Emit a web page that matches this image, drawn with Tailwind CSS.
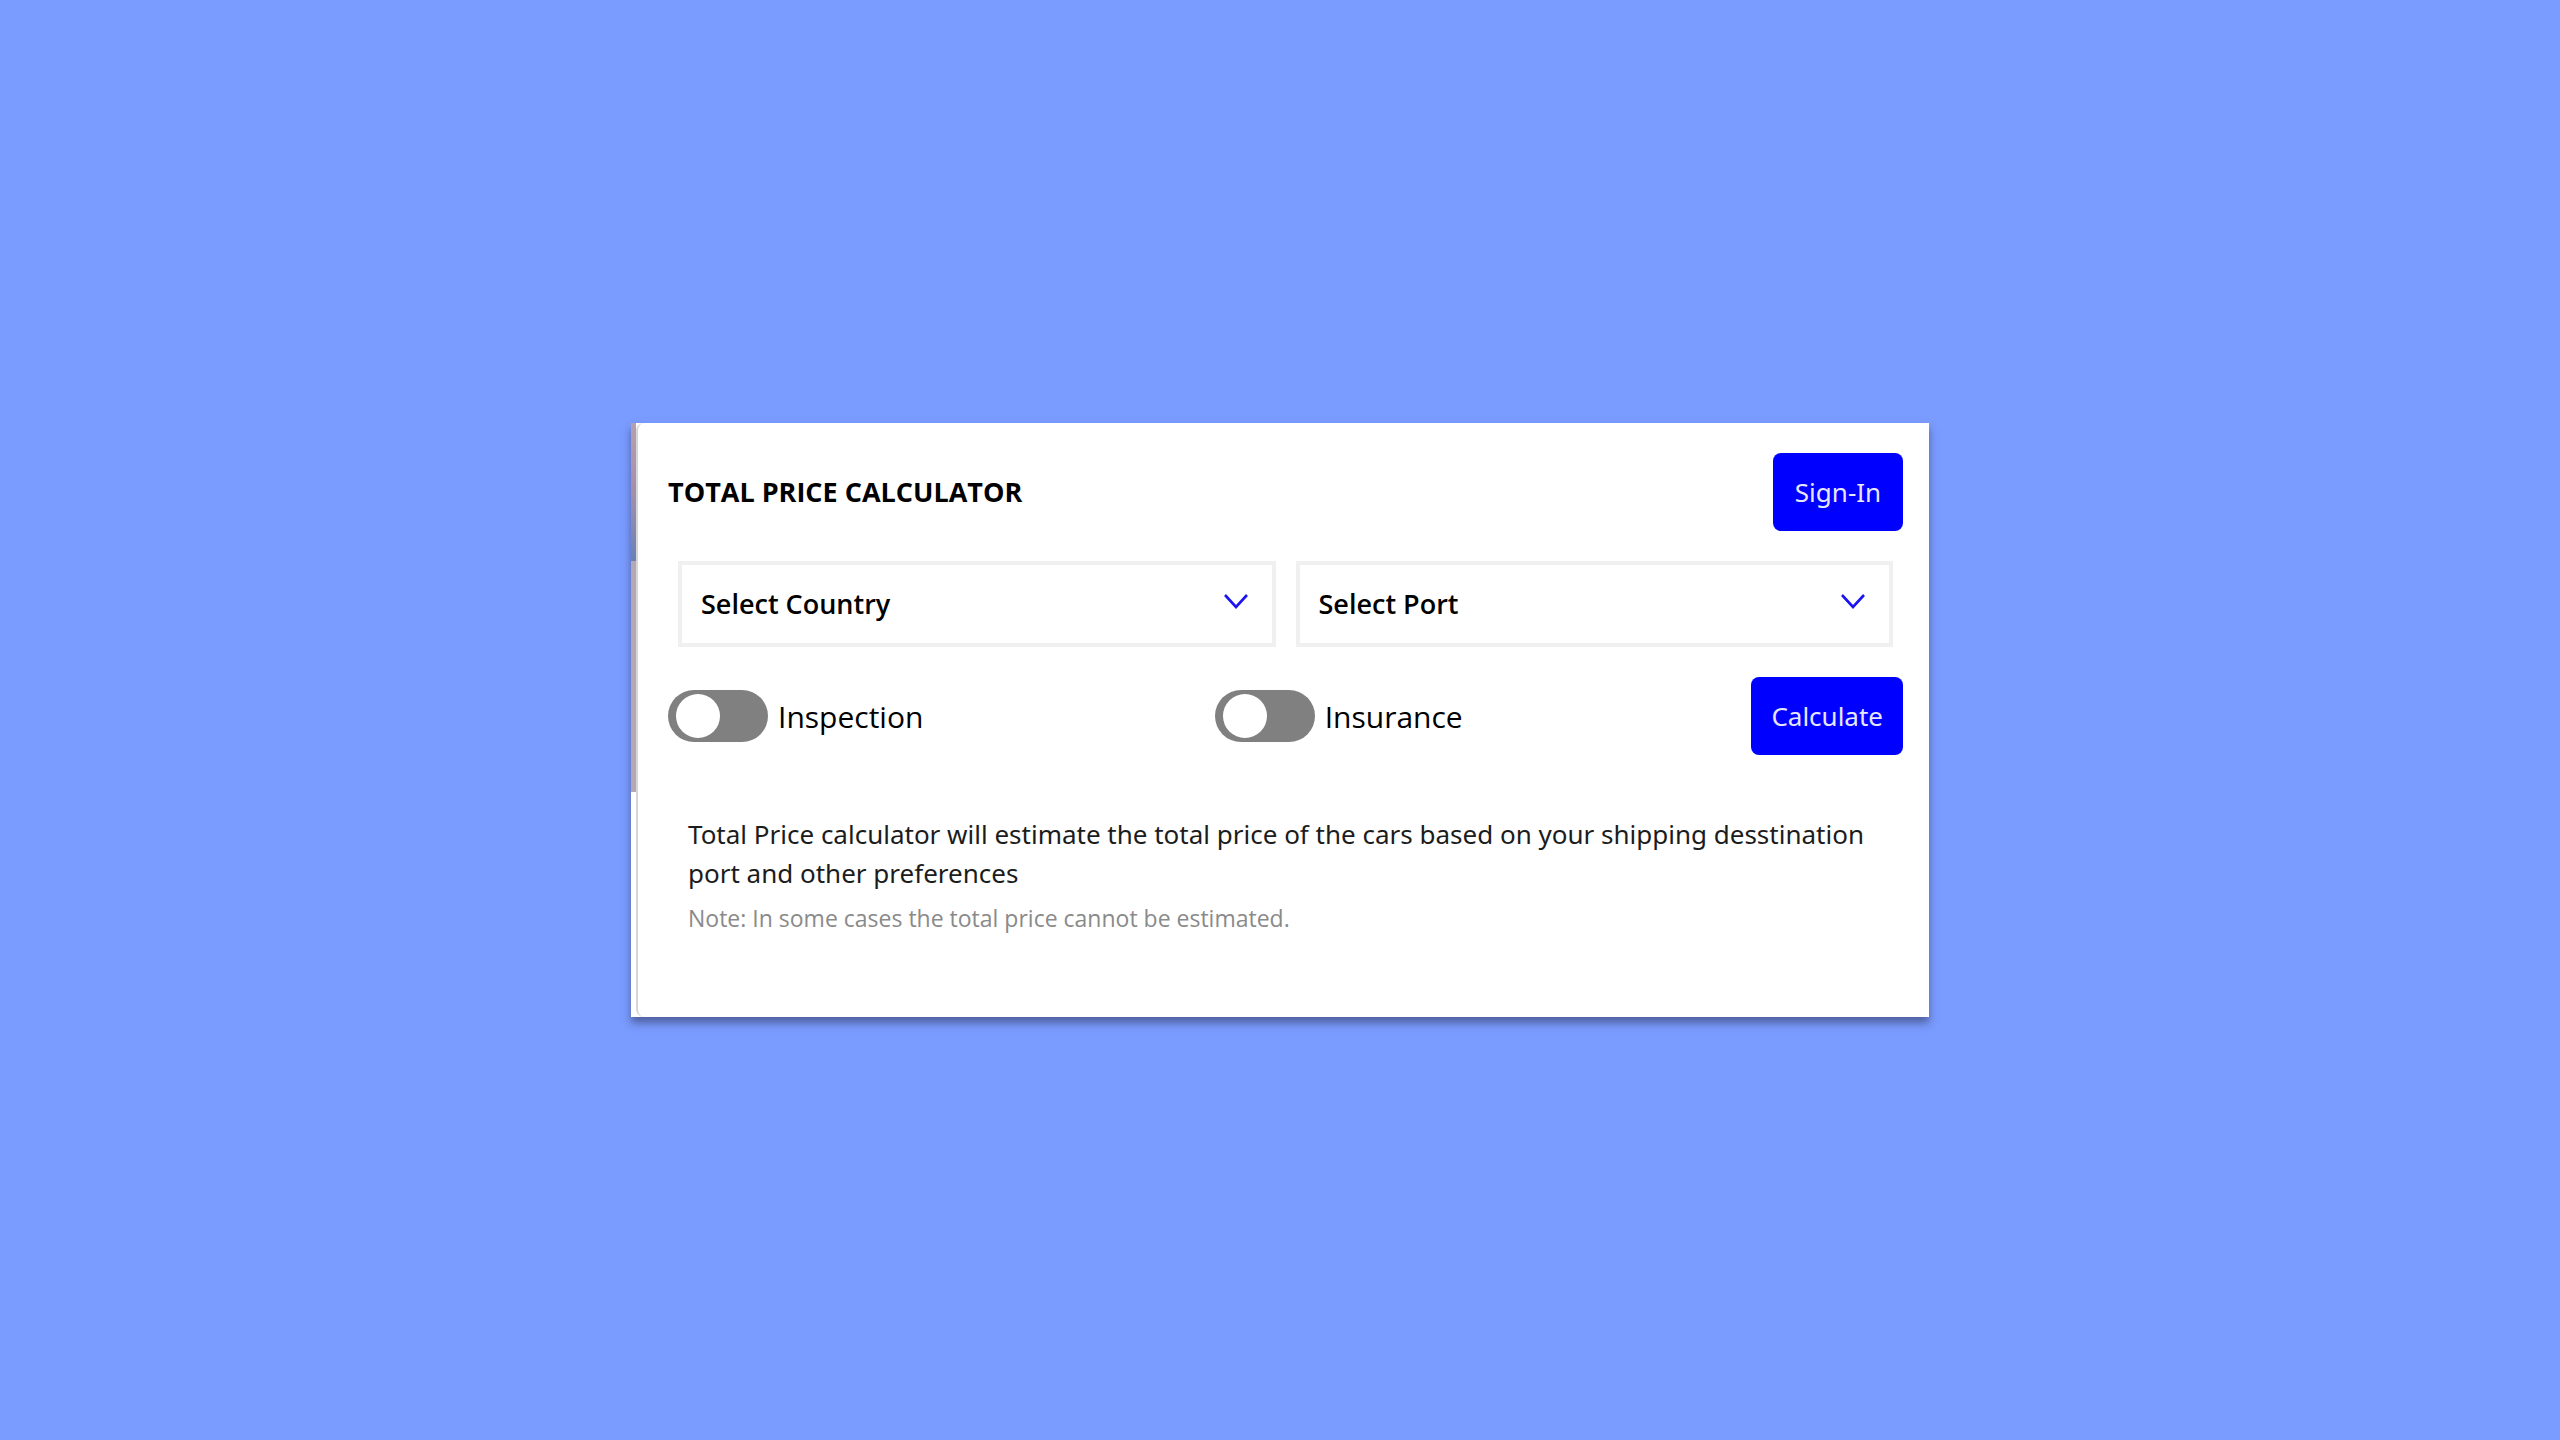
<!DOCTYPE html>
<html lang="en">
<head>
<meta charset="utf-8">
<meta name="viewport" content="width=device-width, initial-scale=1">
<title>Total Price Calculator</title>
<script src="https://cdn.jsdelivr.net/npm/@tailwindcss/browser@4"></script>
</head>
<body class="flex min-h-screen items-center justify-center bg-[#7a9bff] font-['Open_Sans','Noto_Sans',sans-serif] text-black">
<main class="flex w-full max-w-[1298px] bg-white shadow-[0_6px_8px_rgba(40,40,70,0.5)]">
  <!-- sliver of the page behind the panel -->
  <div class="flex w-[5px] shrink-0 flex-col" aria-hidden="true">
    <div class="h-[138px] bg-linear-to-b from-[#b5a0ae] via-[#a58fa8] via-50% to-[#6781b4]"></div>
    <div class="h-[231px] bg-[#b2a9b2]"></div>
  </div>
  <form class="min-w-0 flex-1 rounded-l-lg border-l-2 border-[#d6d6da] pt-[30px] pr-[26px] pb-[82px] pl-[30px]">
    <header class="flex items-center justify-between">
      <h1 class="text-[27px] font-bold">TOTAL PRICE CALCULATOR</h1>
      <button type="button" class="h-[78px] min-w-[130px] rounded-lg bg-[#0000ff] px-5 font-['Noto_Sans',sans-serif] text-[26px] text-[#e6e6ff]">Sign-In</button>
    </header>
    <div class="mt-[30px] grid grid-cols-2 gap-5 px-[10px]">
      <div class="relative">
        <select aria-label="Country" class="h-[86px] w-full appearance-none border-4 border-[#f0f0f0] bg-white pr-16 pl-[19px] text-[27px] font-semibold">
          <option>Select Country</option>
        </select>
        <svg class="pointer-events-none absolute top-8 right-7 h-4 w-6" viewBox="0 0 24 16" fill="none" stroke="#1c14f0" stroke-width="2.6"><path d="M1 2L12 14L23 2"/></svg>
      </div>
      <div class="relative">
        <select aria-label="Port" class="h-[86px] w-full appearance-none border-4 border-[#f0f0f0] bg-white pr-16 pl-[19px] text-[27px] font-semibold">
          <option>Select Port</option>
        </select>
        <svg class="pointer-events-none absolute top-8 right-7 h-4 w-6" viewBox="0 0 24 16" fill="none" stroke="#1c14f0" stroke-width="2.6"><path d="M1 2L12 14L23 2"/></svg>
      </div>
    </div>
    <div class="mt-[30px] grid grid-cols-[546fr_536fr_auto] items-center">
      <label class="flex items-center gap-[10px] text-[30px]">
        <input type="checkbox" role="switch" class="h-[52px] w-[100px] appearance-none rounded-full bg-[#808080] px-2 py-1 before:block before:size-[44px] before:rounded-full before:bg-white before:content-[''] checked:bg-[#0000ff] checked:before:ml-10">
        Inspection
      </label>
      <label class="flex items-center gap-[10px] text-[30px]">
        <input type="checkbox" role="switch" class="h-[52px] w-[100px] appearance-none rounded-full bg-[#808080] px-2 py-1 before:block before:size-[44px] before:rounded-full before:bg-white before:content-[''] checked:bg-[#0000ff] checked:before:ml-10">
        Insurance
      </label>
      <button type="submit" class="h-[78px] min-w-[130px] rounded-lg bg-[#0000ff] px-5 font-['Noto_Sans',sans-serif] text-[26px] text-[#e6e6ff]">Calculate</button>
    </div>
    <div class="mt-[60px] pl-5">
      <p class="font-['Noto_Sans',sans-serif] text-[26px] leading-[39px] text-[#1c1c1c]">Total Price calculator will estimate the total price of the cars based on your shipping desstination port and other preferences</p>
      <p class="mt-2 text-[23px] leading-[34px] text-[#8a8a8a]">Note: In some cases the total price cannot be estimated.</p>
    </div>
  </form>
</main>
</body>
</html>
